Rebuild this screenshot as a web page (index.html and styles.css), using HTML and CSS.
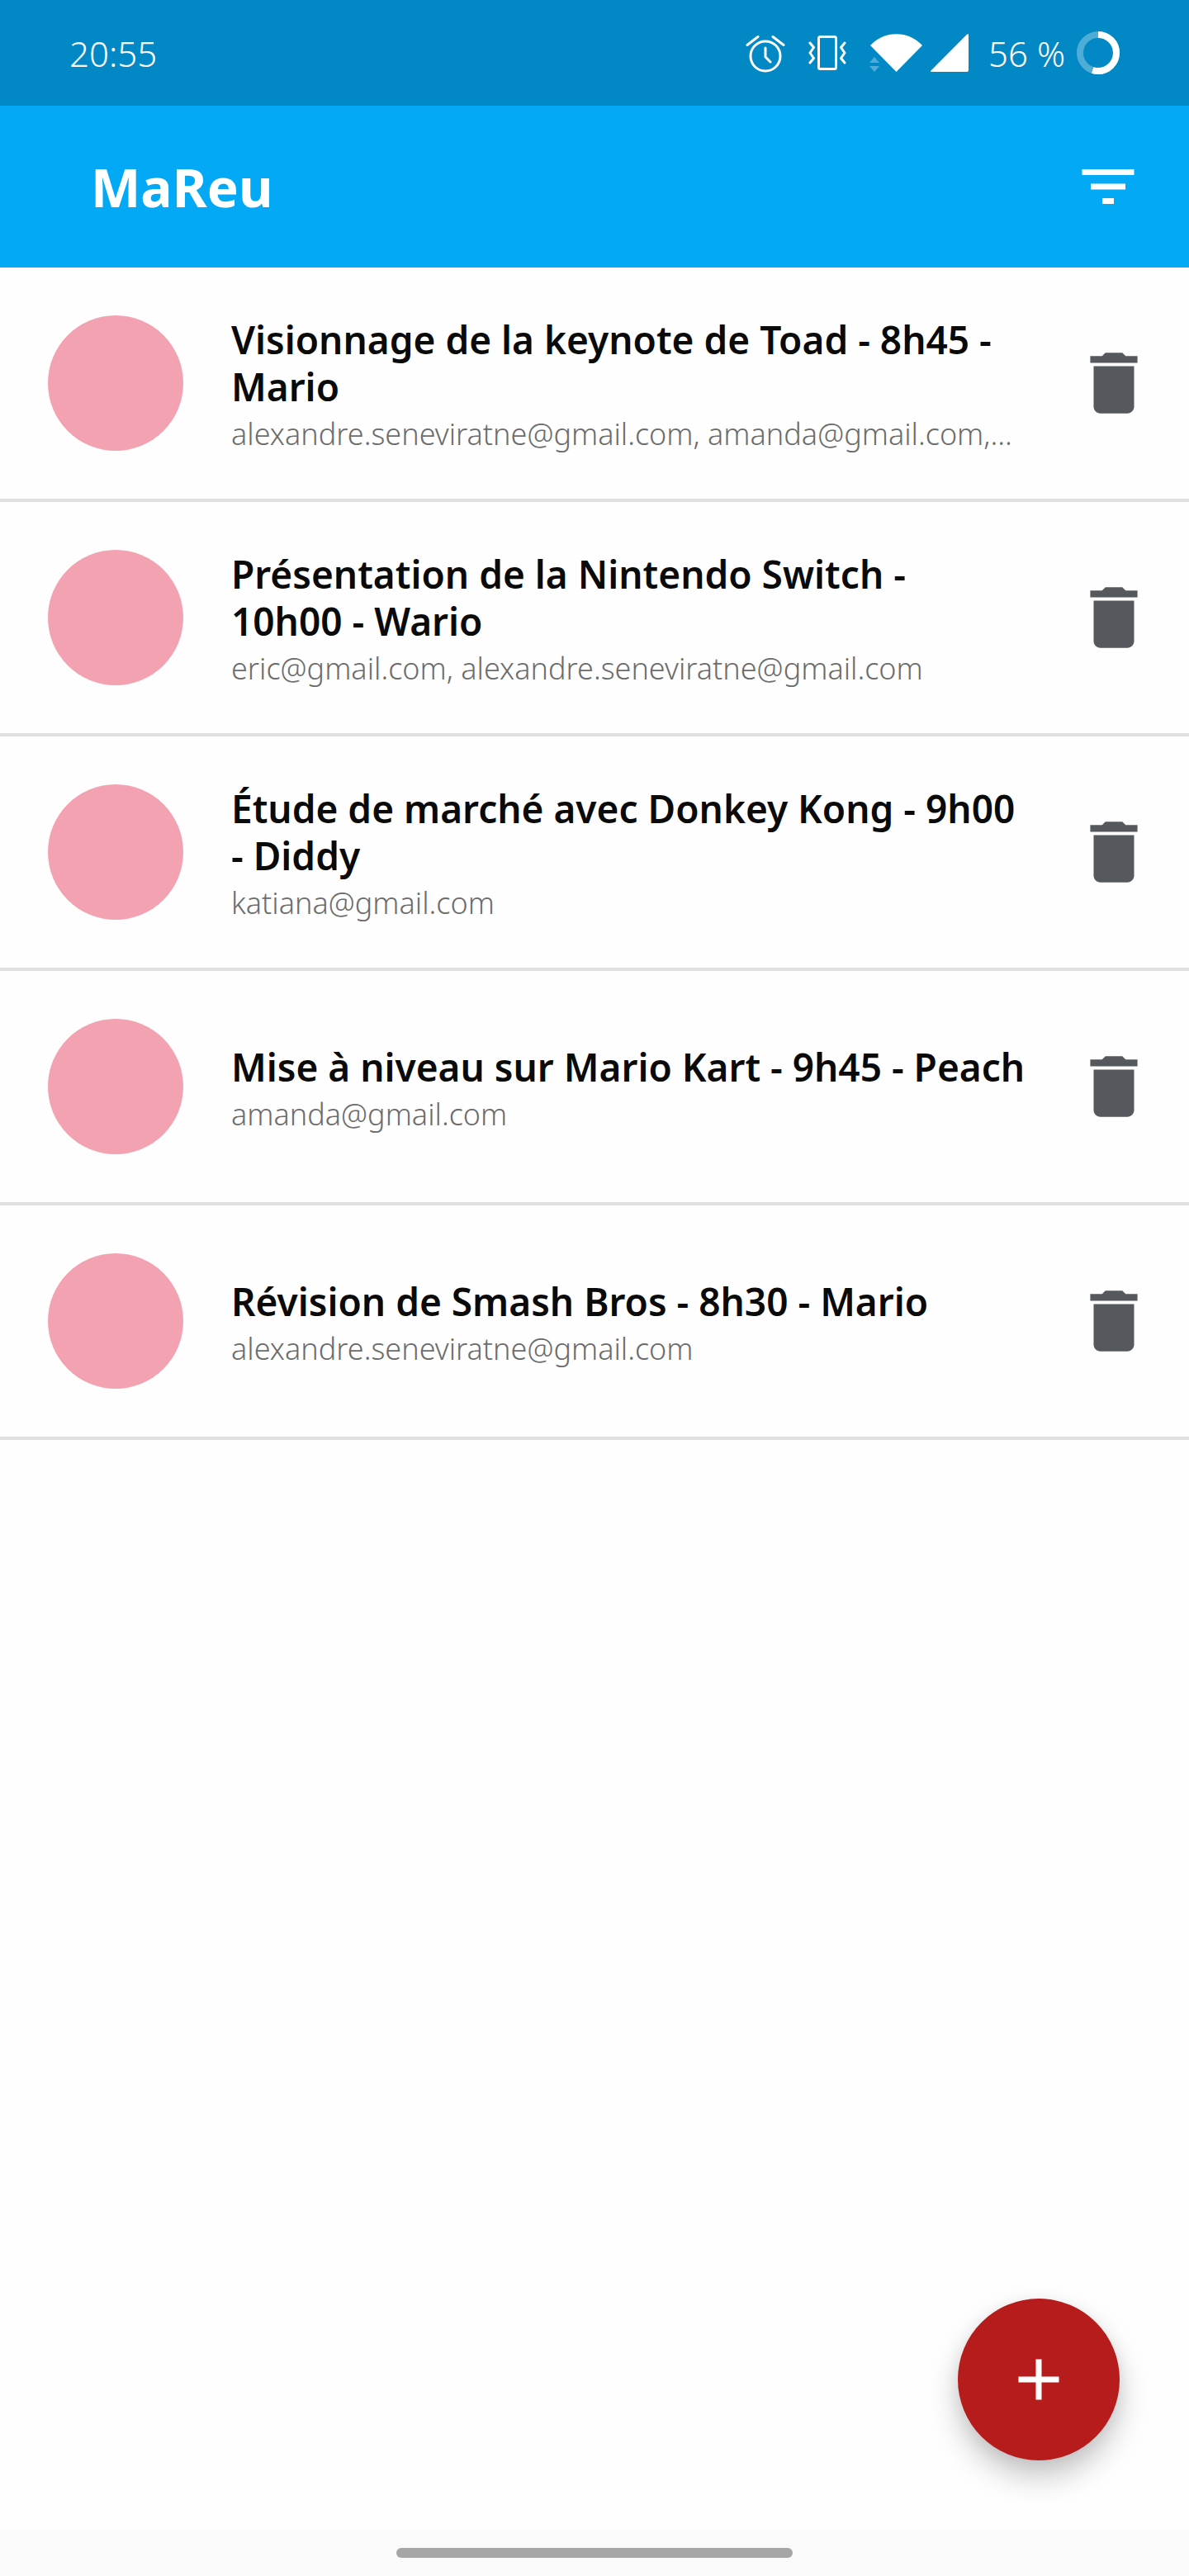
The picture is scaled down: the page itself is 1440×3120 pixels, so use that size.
FILE: index.html
```html
<!DOCTYPE html>
<html lang="fr">
<head>
<meta charset="utf-8">
<meta name="viewport" content="width=device-width, initial-scale=1">
<title>MaReu</title>
<link rel="stylesheet" href="styles.css">
</head>
<body>
<svg class="sprite" aria-hidden="true">
  <symbol id="delete" viewBox="0 0 24 24"><path d="M6 19c0 1.1.9 2 2 2h8c1.1 0 2-.9 2-2V7H6v12zM19 4h-3.5l-1-1h-5l-1 1H5v2h14V4z"/></symbol>
</svg>

<div class="status-bar">
  <time class="clock">20:55</time>
  <div class="status-icons">
    <svg class="alarm" width="48" height="48" viewBox="0 0 48 48" fill="none" stroke="currentColor" stroke-width="3" stroke-linecap="round" aria-hidden="true">
      <circle cx="24" cy="28" r="18"/>
      <path d="M24 18v11l6 6M2 14.500l13-10M33 4.500l13 10"/>
    </svg>
    <svg class="vibrate" width="46" height="48" viewBox="0 0 46 48" fill="none" stroke="currentColor" stroke-width="3" stroke-linecap="round" stroke-linejoin="round" aria-hidden="true">
      <rect x="12.500" y="4.500" width="21" height="39" rx="2"/>
      <path d="M2 12l4.500 5.500L2 24l4.500 6.500L2 36M44 12l-4.500 5.500L44 24l-4.500 6.500L44 36"/>
    </svg>
    <svg class="wifi" width="64" height="48" viewBox="0 0 64 48" fill="currentColor" aria-hidden="true">
      <path d="M32.500 47L1 15Q14 1.200 32.500 1.200T64 15z"/>
      <path opacity=".3" d="M0 36l6-7 6 7zM0 40h12l-6 7z"/>
    </svg>
    <svg class="signal" width="46" height="48" viewBox="0 0 46 48" fill="currentColor" aria-hidden="true">
      <path d="M1 47q-1.500 0-.500-1.500L44 1.800q2-1.500 2 .700V45q0 2-2 2z"/>
    </svg>
    <span class="battery-level">56 %</span>
    <svg class="battery" width="52" height="52" viewBox="0 0 52 52" fill="none" stroke="currentColor" stroke-width="8" aria-hidden="true">
      <circle cx="26" cy="26" r="22" opacity=".3"/>
      <circle cx="26" cy="26" r="22" pathLength="100" stroke-dasharray="55 45" transform="rotate(-90 26 26)"/>
    </svg>
  </div>
</div>

<header class="app-bar">
  <h1 class="app-title">MaReu</h1>
  <button class="icon-button" type="button" aria-label="Filtrer">
    <svg class="filter-icon" viewBox="0 0 24 24" aria-hidden="true"><path d="M10 18h4v-2h-4v2zM3 6v2h18V6H3zm3 7h12v-2H6v2z"/></svg>
  </button>
</header>

<main class="content">
  <ul class="meetings">
    <li class="meeting">
      <span class="avatar"></span>
      <div class="details">
        <h2 class="subject">Visionnage de la keynote de Toad - 8h45 - Mario</h2>
        <p class="guests">alexandre.seneviratne@gmail.com, amanda@gmail.com,…</p>
      </div>
      <button class="icon-button" type="button" aria-label="Supprimer"><svg class="delete-icon" aria-hidden="true"><use href="#delete"/></svg></button>
    </li>
    <li class="meeting">
      <span class="avatar"></span>
      <div class="details">
        <h2 class="subject">Présentation de la Nintendo Switch - 10h00&nbsp;- Wario</h2>
        <p class="guests">eric@gmail.com, alexandre.seneviratne@gmail.com</p>
      </div>
      <button class="icon-button" type="button" aria-label="Supprimer"><svg class="delete-icon" aria-hidden="true"><use href="#delete"/></svg></button>
    </li>
    <li class="meeting">
      <span class="avatar"></span>
      <div class="details">
        <h2 class="subject">Étude de marché avec Donkey Kong - 9h00 - Diddy</h2>
        <p class="guests">katiana@gmail.com</p>
      </div>
      <button class="icon-button" type="button" aria-label="Supprimer"><svg class="delete-icon" aria-hidden="true"><use href="#delete"/></svg></button>
    </li>
    <li class="meeting">
      <span class="avatar"></span>
      <div class="details">
        <h2 class="subject">Mise à niveau sur Mario Kart - 9h45 - Peach</h2>
        <p class="guests">amanda@gmail.com</p>
      </div>
      <button class="icon-button" type="button" aria-label="Supprimer"><svg class="delete-icon" aria-hidden="true"><use href="#delete"/></svg></button>
    </li>
    <li class="meeting">
      <span class="avatar"></span>
      <div class="details">
        <h2 class="subject">Révision de Smash Bros - 8h30 - Mario</h2>
        <p class="guests">alexandre.seneviratne@gmail.com</p>
      </div>
      <button class="icon-button" type="button" aria-label="Supprimer"><svg class="delete-icon" aria-hidden="true"><use href="#delete"/></svg></button>
    </li>
  </ul>
  <button class="fab" type="button" aria-label="Ajouter une réunion">
    <svg class="add-icon" viewBox="0 0 24 24" aria-hidden="true"><path d="M19 13h-6v6h-2v-6H5v-2h6V5h2v6h6v2z"/></svg>
  </button>
</main>

<footer class="gesture-bar"><span class="gesture-handle"></span></footer>
</body>
</html>
```
FILE: styles.css
```css
* {
  box-sizing: border-box;
}

body {
  margin: 0;
  min-height: 100vh;
  display: flex;
  flex-direction: column;
  background: #fefefe;
  color: #0a0a0a;
  font-family: "Noto Sans", "Open Sans", sans-serif;
}

h1,
h2,
p,
ul {
  margin: 0;
  padding: 0;
}

svg {
  display: block;
  flex: none;
}

.sprite {
  position: absolute;
  width: 0;
  height: 0;
}

.status-bar {
  display: flex;
  align-items: center;
  justify-content: space-between;
  height: 128px;
  padding: 0 84px;
  background: #0288c4;
  color: #fff;
  font-size: 42px;
  font-weight: 300;
}

.status-icons {
  display: flex;
  align-items: center;
}

.vibrate,
.wifi {
  margin-left: 28px;
}

.signal {
  margin-left: 10px;
}

.battery-level {
  margin-left: 24px;
}

.battery {
  margin-left: 14px;
}

.app-bar {
  display: flex;
  align-items: center;
  justify-content: space-between;
  height: 196px;
  padding: 0 56px 0 110px;
  background: #03a9f5;
  color: #fff;
}

.app-title {
  font-size: 64px;
  font-weight: 700;
}

.icon-button {
  flex: none;
  padding: 0;
  border: 0;
  background: none;
  color: inherit;
  fill: currentColor;
  cursor: pointer;
}

.filter-icon,
.add-icon {
  width: 84px;
  height: 84px;
}

.content {
  position: relative;
  flex: 1;
}

.meetings {
  list-style: none;
}

.meeting {
  display: flex;
  align-items: center;
  min-height: 284px;
  padding: 48px 42px 48px 58px;
  border-bottom: 4px solid #e0e0e0;
}

.avatar {
  flex: none;
  width: 164px;
  height: 164px;
  border-radius: 50%;
  background: #f3a2b1;
}

.details {
  flex: 1;
  min-width: 0;
  padding-top: 6px;
  margin: 0 48px 0 58px;
}

.subject {
  font-size: 46px;
  font-weight: 600;
  line-height: 57px;
}

.guests {
  margin-top: 4px;
  overflow: hidden;
  text-overflow: ellipsis;
  white-space: nowrap;
  color: #6c6c6c;
  font-size: 36px;
  font-weight: 300;
  line-height: 50px;
}

.delete-icon {
  width: 98px;
  height: 98px;
  color: #55585d;
}

.fab {
  position: absolute;
  right: 84px;
  bottom: 84px;
  display: grid;
  place-items: center;
  width: 196px;
  height: 196px;
  padding: 0;
  border: 0;
  border-radius: 50%;
  background: #b71c1c;
  fill: #fff;
  box-shadow: 0 20px 36px rgba(0, 0, 0, .22), 0 4px 20px rgba(0, 0, 0, .06);
  cursor: pointer;
}

.gesture-bar {
  display: grid;
  place-items: center;
  height: 56px;
  background: #fafafa;
}

.gesture-handle {
  width: 480px;
  max-width: 50%;
  height: 12px;
  border-radius: 6px;
  background: #a6a6a6;
}
```
